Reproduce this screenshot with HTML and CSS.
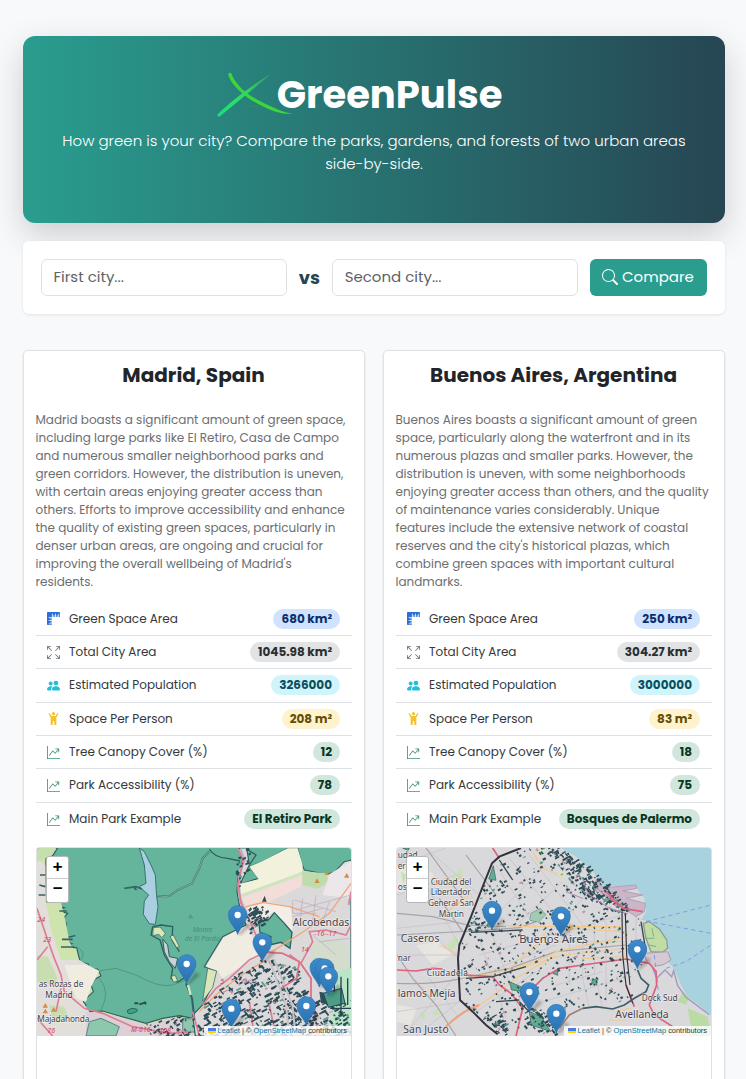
FILE: index.html
```html
<!DOCTYPE html>
<html lang="en">
<head>
<meta charset="utf-8">
<title>GreenPulse</title>
<link rel="stylesheet" href="styles.css">
</head>
<body>
<svg width="0" height="0" class="defs">
  <defs>
    <linearGradient id="pinFill" x1="0" y1="0" x2="0" y2="1"><stop offset="0" stop-color="#3d8ccd"/><stop offset="1" stop-color="#2a70b0"/></linearGradient>
    <filter id="soft" x="-50%" y="-50%" width="200%" height="200%"><feGaussianBlur stdDeviation="4"/></filter>
    <g id="pin">
      <path d="M0 0 L28 -34 L40 -26 L8 3Z" fill="#000" opacity=".25" filter="url(#soft)"/>
      <path d="M0 0 C-5 -18 -28 -36 -28 -59 A28 27 0 0 1 28 -59 C28 -36 5 -18 0 0Z" fill="url(#pinFill)" stroke="#2b74b2" stroke-width="2"/>
      <circle cx="0" cy="-58" r="9.500" fill="#fff"/>
    </g>
    <symbol id="i-rulers" viewBox="0 0 16 16"><path d="M1 0a1 1 0 0 0-1 1v14a1 1 0 0 0 1 1h5v-1H2v-1h4v-1H4v-1h2v-1H2v-1h4V9H4V8h2V7H2V6h4V2h1v4h1V4h1v2h1V2h1v4h1V4h1v2h1V2h1v4h1V1a1 1 0 0 0-1-1z"/></symbol>
    <symbol id="i-full" viewBox="0 0 16 16"><path d="M5.828 10.172a.5.5 0 0 0-.707 0l-4.096 4.096V11.5a.5.5 0 0 0-1 0v3.975a.5.5 0 0 0 .5.5H4.500a.5.5 0 0 0 0-1H1.732l4.096-4.096a.5.5 0 0 0 0-.707m4.344 0a.5.5 0 0 1 .707 0l4.096 4.096V11.5a.5.5 0 1 1 1 0v3.975a.5.5 0 0 1-.5.5H11.500a.5.5 0 0 1 0-1h2.768l-4.096-4.096a.5.5 0 0 1 0-.707m0-4.344a.5.5 0 0 0 .707 0l4.096-4.096V4.500a.5.5 0 1 0 1 0V.525a.5.5 0 0 0-.5-.5H11.500a.5.5 0 0 0 0 1h2.768l-4.096 4.096a.5.5 0 0 0 0 .707m-4.344 0a.5.5 0 0 1-.707 0L1.025 1.732V4.500a.5.5 0 0 1-1 0V.525a.5.5 0 0 1 .5-.5H4.500a.5.5 0 0 1 0 1H1.732l4.096 4.096a.5.5 0 0 1 0 .707"/></symbol>
    <symbol id="i-people" viewBox="0 0 16 16"><path d="M7 14s-1 0-1-1 1-4 5-4 5 3 5 4-1 1-1 1zm4-6a3 3 0 1 0 0-6 3 3 0 0 0 0 6m-5.784 6A2.240 2.240 0 0 1 5 13c0-1.355.68-2.750 1.936-3.720A6.300 6.300 0 0 0 5 9c-4 0-5 3-5 4s1 1 1 1zM4.500 8a2.500 2.500 0 1 0 0-5 2.500 2.500 0 0 0 0 5"/></symbol>
    <symbol id="i-person" viewBox="0 0 16 16"><circle cx="8" cy="2" r="2"/><path d="M3 1.200 5.600 5h4.800L13 1.200l1.200.8L11.500 6.800V16H9.200L8.400 11h-.8L6.800 16H4.500V6.800L1.800 2z"/></symbol>
    <symbol id="i-graph" viewBox="0 0 16 16"><path fill-rule="evenodd" d="M0 0h1v15h15v1H0zm10 3.500a.5.5 0 0 1 .5-.5h4a.5.5 0 0 1 .5.5v4a.5.5 0 0 1-1 0V4.900l-3.613 4.417a.5.5 0 0 1-.74.037L7.060 6.767l-3.656 5.027a.5.5 0 0 1-.808-.588l4-5.500a.5.5 0 0 1 .758-.06l2.609 2.610L13.445 4H10.500a.5.5 0 0 1-.5-.5"/></symbol>
  </defs>
</svg>

<header class="hero">
  <h1 class="brand">
    <svg class="logo" viewBox="0 0 76 48">
      <defs><linearGradient id="lg" x1="0" y1="1" x2="1" y2="0"><stop offset="0" stop-color="#19e07c"/><stop offset=".5" stop-color="#2fdc63"/><stop offset="1" stop-color="#2f9a68"/></linearGradient></defs>
      <path d="M11 3 C15 0 14 3 17 8 C22 16 27 20 34 25 C46 32 62 40 75 43 C60 44 44 35 31 27 C22 20 13 12 11 3Z" fill="#3cd63c"/>
      <path d="M0 44 C14 30 38 12 55 2 C41 14 19 32 2 46Z" fill="url(#lg)"/>
      <path d="M24 35h21" stroke="#2f8a5c" stroke-width="1.500" stroke-dasharray="2 .6"/>
    </svg><span>GreenPulse</span>
  </h1>
  <p class="tagline">How green is your city? Compare the parks, gardens, and forests of two urban areas<br>side-by-side.</p>
</header>

<form class="search">
  <div class="field">First city...</div>
  <span class="vs">vs</span>
  <div class="field">Second city...</div>
  <div class="button"><svg class="glass" viewBox="0 0 16 16"><path fill="currentColor" d="M11.742 10.344a6.500 6.500 0 1 0-1.397 1.398h-.001q.044.060.098.115l3.850 3.850a1 1 0 0 0 1.415-1.414l-3.850-3.850a1 1 0 0 0-.115-.1zM12 6.500a5.500 5.500 0 1 1-11 0 5.500 5.500 0 0 1 11 0"/></svg><span>Compare</span></div>
</form>

<main class="cities">
  <section class="card">
    <h2 class="city">Madrid, Spain</h2>
    <p class="about">Madrid boasts a significant amount of green space,<br>including large parks like El Retiro, Casa de Campo<br>and numerous smaller neighborhood parks and<br>green corridors. However, the distribution is uneven,<br>with certain areas enjoying greater access than<br>others. Efforts to improve accessibility and enhance<br>the quality of existing green spaces, particularly in<br>denser urban areas, are ongoing and crucial for<br>improving the overall wellbeing of Madrid's<br>residents.</p>
    <ul class="stats">
      <li><svg class="ico blue"><use href="#i-rulers"/></svg><span class="name">Green Space Area</span><b class="pill p-blue">680 km²</b></li>
      <li><svg class="ico grey"><use href="#i-full"/></svg><span class="name">Total City Area</span><b class="pill p-grey">1045.98 km²</b></li>
      <li><svg class="ico cyan"><use href="#i-people"/></svg><span class="name">Estimated Population</span><b class="pill p-cyan">3266000</b></li>
      <li><svg class="ico gold"><use href="#i-person"/></svg><span class="name">Space Per Person</span><b class="pill p-gold">208 m²</b></li>
      <li><svg class="ico green"><use href="#i-graph"/></svg><span class="name">Tree Canopy Cover (%)</span><b class="pill p-green">12</b></li>
      <li><svg class="ico green"><use href="#i-graph"/></svg><span class="name">Park Accessibility (%)</span><b class="pill p-green">78</b></li>
      <li><svg class="ico green"><use href="#i-graph"/></svg><span class="name">Main Park Example</span><b class="pill p-green">El Retiro Park</b></li>
    </ul>
    <div class="map">
      <svg class="tiles" viewBox="3 9 942 564">
        <rect x="3" y="9" width="942" height="564" fill="#65b59c"/>
        <!-- western towns -->
        <path d="M3 9H65L50 32 30 40 28 170 75 172 60 180 85 188 62 196 95 205 80 222 92 236 85 262 60 268 96 276 118 272 75 283 108 296 78 308 122 308 132 350 158 358 150 372 185 372 195 392 178 402 165 420 172 440 140 470 150 480 140 495 160 500 200 498 240 510 330 535 380 520 430 512 470 520 478 573H3Z" fill="#cfe3ad" stroke="#2f605f" stroke-width="3.500"/>
        <path d="M3 40 28 60 30 175 45 250 75 345 130 345 160 362 190 378 178 402 165 425 140 470 160 500 150 573H3Z" fill="#e2deda"/>
        <path d="M40 172H75L90 235 100 290 130 345H80L50 250Z" fill="#cfe3ad"/>
        <path d="M85 360 150 360 188 378 165 425 150 470 120 460Z" fill="#f0ece0"/>
        <path d="M3 330 35 335 65 400 50 420 3 410ZM40 480l45 5 15 40-50 10Z" fill="#c8ddb0"/>
        <path d="M3 9H60L48 30 3 50Z" fill="#c5dfae"/>
        <path d="M150 500 210 505 330 540 400 520 470 520 478 573H150Z" fill="#dccfd6"/>
        <path d="M160 530 195 520 250 545 240 573H150ZM440 520l32 2 6 40-38-5Z" fill="#8cc7ae" stroke="#2f605f" stroke-width="2"/>
        <path d="M12 90h16M10 120l18 5M8 150h20M78 283h32M75 306h40M70 198h22" stroke="#33616a" stroke-width="5"/>
        <!-- eastern districts -->
        <path d="M610 9 622 40 612 75 605 105 603 140 610 180 630 240 560 275 520 340 505 365 540 378 530 420 500 480 470 510 478 573H945V45L925 50 895 82 870 88 805 75 795 50 785 9 755 10 680 50 640 65 668 100 612 118 640 60 632 9Z" fill="#dcd9da" stroke="#2f605f" stroke-width="3.500"/>
        <path d="M640 65 680 48 755 10 785 10 800 60 798 90 615 155 605 118 668 103Z" fill="#f2f2dc"/>
        <path d="M615 158 798 92 795 125 700 170 625 180Z" fill="#f2ddd8"/>
        <path d="M615 152 800 84" stroke="#cfe3bb" stroke-width="8"/>
        <path d="M797 78 870 85 880 110 845 132 800 120Z" fill="#bfddac"/>
        <path d="M630 185 700 172 765 185 770 260 715 200 665 230Z" fill="#f3ede6"/>
        <path d="M880 88 945 48V160L860 150Z" fill="#ece7ea"/>
        <path d="M820 290l90-10 30 30v80h-50l-60-40Z" fill="#d3dccd"/><path d="M900 380l45-10v180h-60Z" fill="#b9e6c8"/>
        <path d="M630 242 650 275 690 320 560 400 545 378 510 365 562 278Z" fill="#f1ece2"/>
        <path d="M515 370l27 8-12 50-30 40Z" fill="#dbe5b8" stroke="#2f605f" stroke-width="2"/>
        <path d="M668 230 700 222 715 203 745 235 768 262 762 310 735 292 700 300 705 275 672 262Z" fill="#65b59c" stroke="#2f605f" stroke-width="4"/>
        <!-- reservoir and river -->
        <path d="M310 9 325 20 345 60 358 90 362 155 366 185 358 238 340 236 322 208 325 168 338 150 310 125 330 115 325 60Z" fill="#a9cfe0" stroke="#39736f" stroke-width="3"/>
        <path d="M265 130 300 125 318 132M290 125l12 10" stroke="#34676a" stroke-width="5" fill="none"/>
        <path d="M364 155 400 153 425 135 468 115 490 70 500 40 520 20" fill="none" stroke="#3d7770" stroke-width="6"/><path d="M366 157 400 153 425 135 468 115 490 70 500 40 520 20" fill="none" stroke="#9bcab5" stroke-width="2"/>
        <path d="M350 245 375 240 410 245 408 285 430 320M350 245 345 270 372 285 385 330 410 370 405 400 425 412 450 395" fill="none" stroke="#2f5f5e" stroke-width="4"/>
        <path d="M352 248 372 246 388 265 378 278 368 268 350 272ZM402 275 412 270 430 305 422 308ZM405 395l12-5 8 18-12 4Z" fill="#d9e6b5" stroke="#2f605f" stroke-width="2"/>
        <path d="M380 282 395 300 400 335 425 340 418 370 400 350 385 320Z" fill="#c9d2d6" stroke="#2f605f" stroke-width="3"/>
        <path d="M450 415 468 460 475 520" stroke="#33616a" stroke-width="6" fill="none"/><path d="M456 420l8 30" stroke="#d4e8c0" stroke-width="7"/>
        <path d="M130 310Q150 325 135 345M190 378 240 370 300 390Q370 430 410 420L450 405M190 400Q225 440 195 495" fill="none" stroke="#519680" stroke-width="3"/>
        <path d="M275 495q12-8 25-3t-8 12-17-9" fill="#3aa585" stroke="#2f605f" stroke-width="3"/><path d="M295 475h12M310 478l20-6M325 470l5 8" stroke="#244f56" stroke-width="6"/>
        <path d="M520 12Q535 38 575 40L612 48M632 12 660 30 640 60" fill="none" stroke="#2f605f" stroke-width="4"/>
        <path d="M612 12 625 45 612 78 608 120 612 160 625 195" stroke="#b9b3c0" stroke-width="8" fill="none"/>
        <!-- roads -->
        <g fill="none" stroke="#de7d93" stroke-width="5"><path d="M3 190 30 270 55 340 75 390 85 440 145 490 200 505 290 545 400 565 470 560M35 305 3 345M75 430 60 500M3 520 50 573"/><path d="M605 12 622 45 606 120 615 175 640 225 660 270 690 320 640 345 580 400 540 430 500 480M690 320 740 325 790 350 782 400 735 430M760 328 795 355 830 290 820 260 870 255 930 270 945 240M790 350 825 400 825 470 850 573M945 140 938 180M470 500 490 573M640 470 655 573M700 480 720 573"/></g>
        <g fill="none" stroke="#f2a673" stroke-width="4"><path d="M615 190 680 172 760 185 850 215M700 325 810 255 880 205 945 115M490 500Q560 420 690 345"/></g>
        <g fill="none" stroke="#b9a9bd" stroke-width="2"><path d="M775 165 900 200M780 195 945 150M800 160l-8 70M840 150l-10 80M880 170l-20 60M770 215 860 190M770 165V205H840M850 290l90-10M830 270 900 330"/></g>
        <g data-blocks="madrid"></g>
        <path d="M700 345 750 480 760 573M714 342 769 480 779 573" stroke="#c9c2c8" stroke-width="6" fill="none"/>
        <path d="M690 322 740 325 790 350 782 400 735 430M795 355 825 400 825 470" stroke="#d9728b" stroke-width="4" fill="none"/>
        <path d="M678 170l8-18 6 18ZM640 205l20-12 15 8-20 14ZM850 440l50 10-5 30-40-5Z" fill="#2f4f5c"/>
        <path d="M862 445l55-15 10 45-50 12Z" fill="#4b9d87" stroke="#27494f" stroke-width="3"/>
        <path d="M895 400v40M915 395v120M885 490h60M935 400v80" stroke="#27414f" stroke-width="4"/>
        <g fill="#d58b49"><path d="M20 488l8-14 8 14ZM45 500l8-14 8 14ZM20 505l8-14 8 14ZM835 114l8-14 8 14ZM924 98l8-14 8 14ZM866 90l7-13 7 13Z"/></g><path d="M456 220l8-14 8 14Z" fill="#5c9780"/>
        <g class="road"><text x="4" y="232">24</text><text x="22" y="292">23</text><text x="285" y="560">M-616</text><text x="370" y="565">108</text><text x="34" y="565">76</text><text x="835" y="272">-16--17</text><text x="553" y="418">5</text><text x="795" y="322">14</text></g>
        <g class="forest"><text x="470" y="260">Monte</text><text x="446" y="287">de El Pardo</text></g>
        <g class="place"><text x="770" y="243" textLength="170" lengthAdjust="spacingAndGlyphs" class="town">Alcobendas</text><text x="8" y="426" textLength="134">as Rozas de</text><text x="28" y="458" textLength="82">Madrid</text><text x="4" y="532" textLength="156">Majadahonda</text></g>
        <use href="#pin" x="605" y="268"/><use href="#pin" x="679" y="350"/><use href="#pin" x="452" y="415"/><use href="#pin" x="850" y="426"/><use href="#pin" x="866" y="428"/><use href="#pin" x="877" y="452"/><use href="#pin" x="811" y="541"/><use href="#pin" x="586" y="549"/>
      </svg>
      <div class="zoomer"><span>+</span><span>−</span></div>
      <div class="credit"><i class="flag"></i><a>Leaflet</a> | © <a>OpenStreetMap</a> contributors</div>
    </div>
  </section>

  <section class="card">
    <h2 class="city">Buenos Aires, Argentina</h2>
    <p class="about">Buenos Aires boasts a significant amount of green<br>space, particularly along the waterfront and in its<br>numerous plazas and smaller parks. However, the<br>distribution is uneven, with some neighborhoods<br>enjoying greater access than others, and the quality<br>of maintenance varies considerably. Unique<br>features include the extensive network of coastal<br>reserves and the city's historical plazas, which<br>combine green spaces with important cultural<br>landmarks.</p>
    <ul class="stats">
      <li><svg class="ico blue"><use href="#i-rulers"/></svg><span class="name">Green Space Area</span><b class="pill p-blue">250 km²</b></li>
      <li><svg class="ico grey"><use href="#i-full"/></svg><span class="name">Total City Area</span><b class="pill p-grey">304.27 km²</b></li>
      <li><svg class="ico cyan"><use href="#i-people"/></svg><span class="name">Estimated Population</span><b class="pill p-cyan">3000000</b></li>
      <li><svg class="ico gold"><use href="#i-person"/></svg><span class="name">Space Per Person</span><b class="pill p-gold">83 m²</b></li>
      <li><svg class="ico green"><use href="#i-graph"/></svg><span class="name">Tree Canopy Cover (%)</span><b class="pill p-green">18</b></li>
      <li><svg class="ico green"><use href="#i-graph"/></svg><span class="name">Park Accessibility (%)</span><b class="pill p-green">75</b></li>
      <li><svg class="ico green"><use href="#i-graph"/></svg><span class="name">Main Park Example</span><b class="pill p-green">Bosques de Palermo</b></li>
    </ul>
    <div class="map">
      <svg class="tiles" viewBox="3 9 942 564">
        <rect x="3" y="9" width="942" height="564" fill="#d9d8da"/>
        <path d="M3 60l60-20 50 50-20 60-90-10ZM60 300l70-10 40 40-60 30ZM3 480l60 10-20 50-40-10Z" fill="#e6e5df"/>
        <path d="M165 105l30-35 5 22-28 28ZM150 300l30-25 10 20-25 20ZM15 80l15 10-8 30ZM110 500l18-8 4 14-16 6ZM70 500l20 10-10 15ZM210 500l20-12 8 16Z" fill="#c6e2b4"/>
        <g fill="none" stroke="#c6bfc9" stroke-width="2"><path d="M30 9 190 300M3 150 180 90M3 250 190 230M20 573 190 380M3 330 190 330M3 500 200 470M90 9 250 150M3 60 150 9M60 573 190 470M130 290 190 340M100 400 190 520M250 330 680 210M230 400 480 300M240 500 420 380M300 60 420 250M340 40 520 260M400 30 560 240M450 60 250 260M500 110 330 270M570 150 400 330M520 230V420M560 240V400M595 235V390M630 230V470M480 420 620 380M440 470 680 400M250 280 330 520M290 270 370 500M560 400l20 90M600 400l20 90M720 210V350M740 300h40M690 350l60 60"/></g>
        <g fill="none" stroke="#a8a3a4" stroke-width="3.500"><path d="M3 205 110 215 215 240 330 245M3 270 230 258 370 248 420 230M3 415Q110 420 200 400L340 370 480 320 690 300M90 9 200 160M210 30 300 150M3 330 50 400 120 480 180 573M130 160 200 260"/></g>
        <g fill="none" stroke="#f3c98c" stroke-width="3.500"><path d="M130 300 190 330M190 90 230 160M200 400Q400 370 480 320L690 275M340 380 500 330 690 310M300 240 400 245 680 245M500 250 690 260M480 290 690 290M240 490 360 400 480 330M410 20 440 70 500 95M560 340 690 335M450 260 420 300 340 370M160 195 220 150M670 500l30-10M640 525h50"/></g>
        <path d="M135 560Q190 500 250 480" fill="none" stroke="#ef9f84" stroke-width="6"/>
        <!-- river and shore -->
        <path d="M495 9 540 35 590 80 625 125 720 120 725 135 745 160 750 200 735 225 760 228 790 250 815 290 818 320 810 345 830 365 840 385 855 420 875 455 945 510V9Z" fill="#a9d2df"/>
        <path d="M590 110 630 128 720 120 722 130 680 138 740 150 690 160 748 175 745 200 720 215 690 195 620 150Z" fill="#cab6c6" stroke="#b3a0bb" stroke-width="3"/>
        <path d="M742 235 760 230 790 252 812 285 815 310 800 322 765 320 750 280Z" fill="#c1dda4" stroke="#8c9c93" stroke-width="4"/>
        <path d="M750 280l25 0M760 300l20 5M768 250l5 25" stroke="#7fae87" stroke-width="3"/>
        <path d="M745 325 815 320 825 345 800 360 765 365 750 345Z" fill="#d5c9d3" stroke="#a99ab6" stroke-width="3"/>
        <path d="M830 375 845 420 870 455 945 512V573H770L755 360Z" fill="#d9d8da"/>
        <path d="M860 440l20 15-10 25-25-10ZM875 490l60 25 10 58H890ZM790 545l50 0 5 20-50 5Z" fill="#badba4"/>
        <path d="M770 370l12 30 25-25 20 20 6-18 12 45 25 35 70 52" fill="none" stroke="#a297c0" stroke-width="4"/>
        <path d="M750 230 945 180M750 228 945 265M810 370 870 350 945 300M775 330 785 420 790 470" fill="none" stroke="#7f9fdb" stroke-width="3" stroke-dasharray="13 10"/>
        <!-- city parks -->
        <path d="M292 62l8 44-22-4ZM405 205l28-14 16 18-22 22-25-6ZM340 410l35 15 10 15-38-5ZM400 500l35 15 30 45-60-20ZM470 385l15-12v18ZM590 405l14-5-2 20-16-4ZM20 9h20l-4 8Z" fill="#62ac93" stroke="#2f605f" stroke-width="2"/>
        <path d="M425 12l18 0-4 20-16-5ZM485 85l18-8 8 15-20 5Z" fill="#cfeab4"/>
        <path d="M405 205l28-14 16 18-22 22-25-6Z" fill="#a5cab2"/>
        <g fill="none" stroke="#df5f7c" stroke-width="5"><path d="M3 375 60 378 110 370 140 372M205 390 290 395 310 420 345 445 380 490 360 573M290 9 310 40M410 430 440 400 490 370 560 360 690 342 760 355 780 380 782 420 760 480 775 510 830 545M690 420 715 485"/></g>
        <g data-blocks="ba"></g>
        <path d="M630 140 680 190 740 200M640 160l50 35" fill="none" stroke="#df5f7c" stroke-width="5"/>
        <g fill="none" stroke="#b088b8" stroke-width="3"><path d="M560 100 575 145 640 190 690 205M510 140 560 160M600 130l60 40"/></g>
        <path d="M375 9 310 35 288 55 262 120 225 215 190 300 186 340 192 465 230 500 270 540 305 568" fill="none" stroke="#34323f" stroke-width="6"/>
        <path d="M678 200 680 330 690 420 710 475M688 205 692 330 702 420" fill="none" stroke="#33313d" stroke-width="3.500"/>
        <path d="M225 262 380 255M310 45 350 105M210 400 290 395 390 365M300 470 370 465M370 470 400 500" fill="none" stroke="#37474f" stroke-width="4"/>
        <path d="M725 375 735 400 758 420 750 440 715 460 685 480 650 492 600 485 560 490" fill="none" stroke="#3f5c68" stroke-width="5"/>
        <path d="M560 490 520 510 490 550" fill="none" stroke="#a07f77" stroke-width="5"/>
        <path d="M735 230 750 320" stroke="#2f4a50" stroke-width="4"/>
        <g class="place"><text x="5" y="38">udad</text><text x="5" y="72">er</text><text x="5" y="135">os</text><text x="104" y="119" textLength="122">Ciudad del</text><text x="104" y="151" textLength="120">Libertador</text><text x="96" y="183" textLength="138">General San</text><text x="128" y="215" textLength="76">Martin</text><text x="14" y="291" textLength="116" class="town">Caseros</text><text x="5" y="347">nar</text><text x="92" y="392" textLength="124">Ciudadela</text><text x="5" y="456" textLength="174" class="town">lamos Mejía</text><text x="22" y="564" textLength="136" class="town">San Justo</text><text x="370" y="293" textLength="206" lengthAdjust="spacingAndGlyphs" class="town">Buenos Aires</text><text x="737" y="467" textLength="108">Dock Sud</text><text x="658" y="520" textLength="160" class="town">Avellaneda</text></g>
        <use href="#pin" x="288" y="255"/><use href="#pin" x="495" y="272"/><use href="#pin" x="724" y="371"/><use href="#pin" x="400" y="499"/><use href="#pin" x="481" y="564"/>
      </svg>
      <div class="zoomer"><span>+</span><span>−</span></div>
      <div class="credit"><i class="flag"></i><a>Leaflet</a> | © <a>OpenStreetMap</a> contributors</div>
    </div>
  </section>
</main>
<script src="map.js"></script>
</body>
</html>
```
FILE: styles.css
```css
* { box-sizing: border-box; }
body { margin: 0; padding: 36px 21px 0 23px; height: 1079px; overflow: hidden; background: #f8f9fa; color: #212529; font-family: Poppins, Inter, "Open Sans", sans-serif; }
.defs { position: absolute; }
.hero { height: 187px; padding-top: 35px; border-radius: 12px; background: linear-gradient(90deg, #2a9d8f, #264653); box-shadow: 0 12px 34px rgba(0, 0, 0, .18); color: #fff; text-align: center; }
.brand { display: flex; justify-content: center; height: 48px; margin: 0; padding-right: 29px; line-height: 48px; font-size: 38.500px; font-weight: 700; }
.brand span { margin-left: -16px; white-space: nowrap; }
.logo { width: 76px; height: 48px; }
.tagline { margin: 10px 0 0; font-size: 15px; font-weight: 300; line-height: 23px; color: #fff; white-space: nowrap; }
.search { display: flex; align-items: center; gap: 12px; height: 73px; margin: 18px 0 36px; padding: 0 18px; border-radius: 6px; background: #fff; box-shadow: 0 1px 3px rgba(0, 0, 0, .09); position: relative; }
.field { display: flex; align-items: center; flex: 1; height: 37px; padding: 0 11.500px 2px; border: 1px solid #dee2e6; border-radius: 6px; color: #5d6267; font-size: 15px; }
.vs { padding-bottom: 1px; color: #264653; font-size: 18px; font-weight: 700; }
.button { display: flex; align-items: center; gap: 4px; width: 117px; height: 37px; padding: 0 0 2px 12px; border-radius: 6px; background: #2a9d8f; color: #fff; font-size: 15px; }
.glass { width: 16px; height: 16px; }
.cities { display: grid; grid-template-columns: 1fr 1fr; gap: 18px; }
.card { display: flex; flex-direction: column; height: 729px; padding: 10px 12px 0; border: 1px solid #dfe2e5; border-bottom: 0; border-radius: 5px 5px 0 0; background: #fff; box-shadow: 0 1px 3px rgba(0, 0, 0, .08); }
.city { height: 28px; margin: 0 1px 22px 0; text-align: center; line-height: 28px; font-size: 20px; font-weight: 700; white-space: nowrap; }
.about { margin: 0 0 11.600px -.5px; color: #6b6e71; font-size: 12px; line-height: 18px; white-space: nowrap; }
.stats { margin: 0; padding: 0; list-style: none; }
.stats li { display: flex; align-items: center; height: 33.350px; padding: 0 12px 0 11px; border-bottom: 1px solid #dee2e6; font-size: 12px; color: #34383c; }
.stats li:last-child { border: 0; }
.ico { width: 13px; height: 13px; margin-right: 9px; fill: currentColor; }
.blue { color: #2a6fd6; } .grey { color: #6c757d; } .cyan { color: #25bfd8; } .gold { color: #f2c230; } .green { color: #3d9070; }
.name { margin-right: auto; white-space: nowrap; }
.pill { display: flex; align-items: center; height: 20px; padding: 0 8px; border-radius: 10px; font-size: 12px; font-weight: 700; white-space: nowrap; }
.p-blue { background: #cfe2ff; color: #0d2f69; } .p-grey { background: #e2e3e5; color: #2b2f32; } .p-cyan { background: #cff4fc; color: #0a4f5d; } .p-gold { background: #fff3cd; color: #664d03; } .p-green { background: #d1e7dd; color: #0a3622; }
.map { position: relative; flex: 1; margin-top: 11.200px; border: 1px solid #dee2e6; border-bottom: 0; border-radius: 4px 4px 0 0; overflow: hidden; }
.tiles { display: block; width: 314px; height: 188px; }
.place text { fill: #45424a; stroke: #fff; stroke-opacity: .5; stroke-width: 4px; paint-order: stroke; font-family: "Noto Sans", "Open Sans", sans-serif; }
.place { font-size: 25px; }
.place .town { font-size: 31px; }
.road { font: italic 21px "Noto Sans", sans-serif; fill: #ce3b5f; }
.forest { font: italic 21px "Noto Sans", sans-serif; fill: #45907a; }
.zoomer { position: absolute; left: 9px; top: 8px; width: 23px; height: 47px; border: 1px solid #b5b8b8; border-radius: 3px; background: #fff; }
.zoomer span { display: block; height: 22px; text-align: center; font: 700 17px/22px "Liberation Mono", monospace; color: #000; }
.zoomer span:first-child { border-bottom: 1px solid #ccc; }
.credit { position: absolute; right: 0; top: 178px; height: 10px; padding: 0 4px; background: rgba(255, 255, 255, .8); color: #333; font: 7.450px/10px "Liberation Sans", sans-serif; white-space: nowrap; }
.credit a { color: #0078a8; }
.flag { display: inline-block; width: 8px; height: 5px; margin-right: 2px; background: linear-gradient(#4c7be1 50%, #ffd500 50%); }
```
FILE: map.js
```javascript
// Scatters small building and park footprints over the urban areas of each map.
var areas = {
  madrid: [
    { n: 800, w: 16, p: [[580, 400], [680, 340], [790, 370], [785, 430], [830, 470], [945, 450], [945, 573], [480, 573], [500, 480]] },
    { n: 80, w: 12, p: [[625, 190], [690, 180], [690, 230], [640, 265]] },
    { n: 60, w: 10, p: [[330, 535], [420, 515], [470, 520], [470, 573], [330, 573]] },
    { n: 25, w: 10, p: [[600, 12], [640, 12], [625, 120], [603, 130]] }
  ],
  ba: [
    { n: 800, w: 7, p: [[310, 40], [375, 9], [480, 9], [620, 180], [730, 220], [750, 330], [730, 370], [700, 470], [560, 485], [480, 530], [305, 565], [194, 465], [190, 300], [260, 120]] },
    { n: 780, w: 12, p: [[455, 9], [495, 9], [600, 90], [640, 130], [700, 190], [690, 215], [640, 195], [560, 150], [490, 60]] },
    { n: 60, w: 12, p: [[380, 490], [470, 500], [480, 573], [390, 573]] },
    { n: 50, w: 9, p: [[225, 210], [290, 230], [240, 270], [205, 280]] },
    { n: 60, w: 9, p: [[270, 510], [330, 530], [330, 573], [300, 565]] }
  ]
};
var seed = 7;
function rnd() { seed = (seed * 16807) % 2147483647; return seed / 2147483647; }
function inside(p, x, y) {
  var c = false;
  for (var i = 0, j = p.length - 1; i < p.length; j = i++) {
    if ((p[i][1] > y) !== (p[j][1] > y) && x < (p[j][0] - p[i][0]) * (y - p[i][1]) / (p[j][1] - p[i][1]) + p[i][0]) c = !c;
  }
  return c;
}
document.querySelectorAll('[data-blocks]').forEach(function (g) {
  var out = '';
  areas[g.dataset.blocks].forEach(function (z) {
    var xs = z.p.map(function (q) { return q[0]; }), ys = z.p.map(function (q) { return q[1]; });
    var x0 = Math.min.apply(0, xs), x1 = Math.max.apply(0, xs), y0 = Math.min.apply(0, ys), y1 = Math.max.apply(0, ys);
    for (var i = 0; i < z.n; i++) {
      var x = x0 + rnd() * (x1 - x0), y = y0 + rnd() * (y1 - y0), w = 3 + rnd() * z.w, h = 3 + rnd() * 4, r = rnd() < .7 ? -28 : 50, t = rnd();
      if (!inside(z.p, x, y)) continue;
      x = x.toFixed(0); y = y.toFixed(0);
      out += '<rect x="' + x + '" y="' + y + '" width="' + w.toFixed(1) + '" height="' + h.toFixed(1) + '" transform="rotate(' + r + ' ' + x + ' ' + y + ')" fill="' + (t < .85 ? '#2d4a55' : t < .95 ? '#5c9a88' : '#c9929f') + '"/>';
    }
  });
  g.innerHTML = out;
});
```
